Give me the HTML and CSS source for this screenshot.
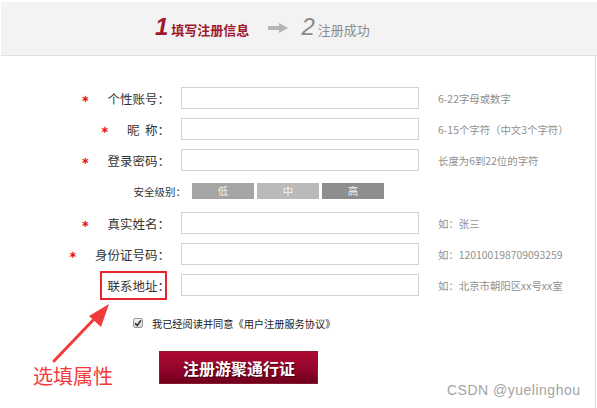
FILE: index.html
```html
<!DOCTYPE html>
<html lang="zh-CN">
<head>
<meta charset="utf-8">
<title>注册</title>
<link rel="stylesheet" href="styles.css">
</head>
<body>
<div class="page">
  <div class="steps">
    <div class="step step-on"><span class="num">1</span><span class="stxt">填写注册信息</span></div>
    <svg class="step-arrow" width="20" height="10" viewBox="0 0 20 10"><rect x="0" y="3" width="12" height="4" fill="#b5b5b5"/><polygon points="11,0 20,5 11,10" fill="#b5b5b5"/></svg>
    <div class="step step-off"><span class="num">2</span><span class="stxt">注册成功</span></div>
  </div>

  <div class="form">
    <div class="row">
      <div class="lab"><span class="star">∗</span>个性账号：</div>
      <input class="field" type="text">
      <div class="hint">6-22字母或数字</div>
    </div>
    <div class="row">
      <div class="lab"><span class="star">∗</span>昵&nbsp;&nbsp;称：</div>
      <input class="field" type="text">
      <div class="hint">6-15个字符（中文3个字符）</div>
    </div>
    <div class="row">
      <div class="lab"><span class="star">∗</span>登录密码：</div>
      <input class="field" type="password">
      <div class="hint">长度为6到22位的字符</div>
    </div>
    <div class="row sec-row">
      <div class="sec-lab">安全级别：</div>
      <div class="bars">
        <span class="bar bar-low">低</span>
        <span class="bar bar-mid">中</span>
        <span class="bar bar-high">高</span>
      </div>
    </div>
    <div class="row">
      <div class="lab"><span class="star">∗</span>真实姓名：</div>
      <input class="field" type="text">
      <div class="hint">如：张三</div>
    </div>
    <div class="row">
      <div class="lab"><span class="star">∗</span>身份证号码：</div>
      <input class="field" type="text">
      <div class="hint">如：120100198709093259</div>
    </div>
    <div class="row">
      <div class="lab">联系地址：</div>
      <input class="field" type="text">
      <div class="hint">如：北京市朝阳区xx号xx室</div>
    </div>

    <div class="agree">
      <span class="check"><svg width="8" height="8" viewBox="0 0 8 8"><path d="M1 4.2 L3.2 6.4 L7 1.2" fill="none" stroke="#333" stroke-width="1.6"/></svg></span>
      <span class="agree-txt">我已经阅读并同意《用户注册服务协议》</span>
    </div>
    <div class="submit-wrap">
      <button class="submit" type="button">注册游聚通行证</button>
    </div>
  </div>

  <div class="mark-box"></div>
  <svg class="mark-arrow" width="597" height="408" viewBox="0 0 597 408">
    <line x1="54" y1="361" x2="98" y2="315" stroke="#f23c3c" stroke-width="3" stroke-linecap="round"/>
    <polygon points="109,304 89,316 101,327" fill="#f23c3c"/>
  </svg>
  <div class="mark-text">选填属性</div>
  <div class="watermark">CSDN @yuelinghou</div>
</div>
</body>
</html>
```

FILE: styles.css
```css
* { box-sizing: border-box; }
html, body { margin: 0; padding: 0; background: #fff; }
body {
  font-family: "Noto Sans CJK SC", "Liberation Sans", sans-serif;
  color: #333;
}
.page {
  position: relative;
  width: 597px;
  height: 408px;
  overflow: hidden;
}
.page::after {
  content: "";
  position: absolute;
  left: 595px;
  top: 56px;
  width: 1px;
  height: 352px;
  background: #dedede;
}

/* steps header */
.steps {
  margin: 2px 0 0 1px;
  height: 54px;
  background: #f3f3f3;
  border-bottom: 1px solid #e1e1e1;
  display: flex;
  align-items: center;
  padding: 0 0 4px 154px;
}
.step { display: flex; align-items: baseline; }
.num {
  font-family: "Liberation Sans", sans-serif;
  font-style: italic;
  font-weight: bold;
  font-size: 24px;
  line-height: 24px;
}
.stxt { font-size: 13px; line-height: 16px; margin-left: 3px; }
.step-on { color: #a0182c; }
.step-on .stxt { font-weight: bold; }
.step-off { color: #8c8c8c; margin-left: 13px; }
.step-off .num { font-weight: normal; color: #8a8a8a; }
.step-off .stxt { margin-left: 3px; }
.step-arrow { margin-left: 19px; margin-top: 2px; }

/* form */
.form {
  padding-top: 31px;
  display: flex;
  flex-direction: column;
  gap: 9px;
}
.row {
  display: flex;
  align-items: center;
  height: 22px;
}
.lab {
  width: 170px;
  display: flex;
  justify-content: flex-end;
  align-items: center;
  font-size: 12.5px;
  color: #333;
  white-space: nowrap;
}
.star {
  font-family: "DejaVu Sans", sans-serif;
  color: #e8101c;
  font-size: 10px;
  font-weight: bold;
  margin-right: 18px;
}
.field {
  margin: 0 0 0 11px;
  width: 238px;
  height: 22px;
  border: 1px solid #d2d2d2;
  background: #fff;
  padding: 0 4px;
  outline: none;
}
.hint {
  margin-left: 19px;
  width: 130px;
  overflow: hidden;
  white-space: nowrap;
  font-size: 10.4px;
  color: #909090;
}

.sec-row { height: 16px; margin: 3px 0 4px; }
.sec-lab {
  width: 186px;
  text-align: right;
  font-size: 10.5px;
  color: #333;
  white-space: nowrap;
}
.bars { margin-left: 6px; display: flex; gap: 3px; }
.bar {
  width: 62px;
  height: 16px;
  line-height: 16px;
  text-align: center;
  font-size: 10.5px;
  color: #f2f2f2;
}
.bar-low { background: #a5a5a5; }
.bar-mid { background: #bababa; }
.bar-high { background: #8e8e8e; }

.agree {
  display: flex;
  align-items: center;
  padding-left: 133px;
  margin-top: 10px;
  height: 16px;
}
.check {
  width: 10px;
  height: 10px;
  border: 1px solid #9a9a9a;
  border-radius: 2px;
  background: linear-gradient(#f4f4f4, #d8d8d8);
  display: flex;
  align-items: center;
  justify-content: center;
}
.agree-txt {
  margin-left: 9px;
  font-size: 10.2px;
  color: #222;
  white-space: nowrap;
}
.submit-wrap { padding-left: 159px; margin-top: 11px; }
.submit {
  display: block;
  width: 159px;
  height: 33px;
  border: 1px solid #8a1a2e;
  background: linear-gradient(#ad0a33, #93052a 55%, #6f001c);
  color: #fff;
  font-family: "Noto Sans CJK SC", sans-serif;
  font-weight: bold;
  font-size: 16px;
  text-shadow: 1px 1px 1px #3d0010;
  padding: 0 0 0 1px;
}

/* annotations */
.mark-box {
  position: absolute;
  left: 100px;
  top: 271px;
  width: 67px;
  height: 29px;
  border: 2px solid #e8252c;
}
.mark-arrow {
  position: absolute;
  left: 0;
  top: 0;
  pointer-events: none;
}
.mark-text {
  position: absolute;
  left: 33px;
  top: 365px;
  font-size: 20px;
  line-height: 22px;
  color: #f23c3c;
}
.watermark {
  position: absolute;
  left: 447px;
  top: 382px;
  font-family: "Liberation Sans", sans-serif;
  font-size: 14px;
  letter-spacing: 0.5px;
  color: #a3a3a3;
  white-space: nowrap;
}
```
